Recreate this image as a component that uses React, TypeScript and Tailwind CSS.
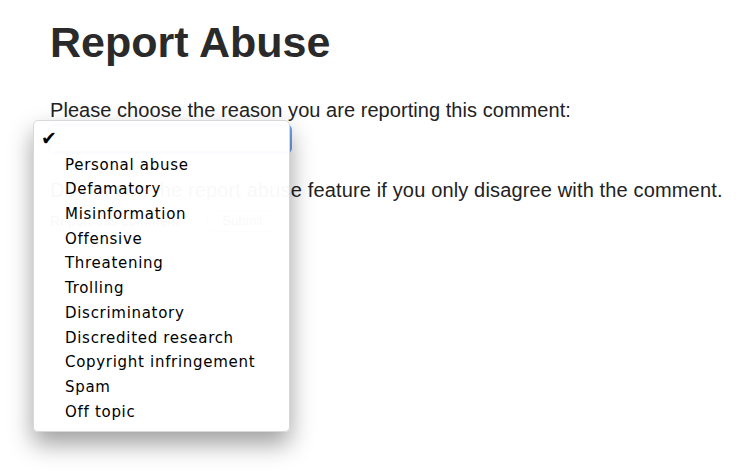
const reasons = [
  "Personal abuse",
  "Defamatory",
  "Misinformation",
  "Offensive",
  "Threatening",
  "Trolling",
  "Discriminatory",
  "Discredited research",
  "Copyright infringement",
  "Spam",
  "Off topic",
];

export default function App() {
  return (
    <div className="relative w-[754px] h-[476px] overflow-hidden bg-white pl-[50px] font-['Liberation_Sans',Arial,sans-serif] text-[#222]">
      {/* PAGE */}
      <h1 className="mt-[21px] text-[43px] leading-[43px] font-bold text-[#2a2a2a]">
        Report Abuse
      </h1>

      <p className="mt-[34px] text-[20px] leading-[24px] tracking-[0.05px]">
        Please choose the reason you are reporting this comment:
      </p>

      <div className="mt-[4px] w-[240px] h-[26px] rounded border border-[#aaa] ring-2 ring-[#6fa0e6]" />

      <p className="mt-[26px] text-[20px] leading-[24px] tracking-[0.15px]">
        Do not use the report abuse feature if you only disagree with the comment.
      </p>

      <div className="mt-[8px] flex items-center gap-[7px] text-[14px]">
        <span className="w-[150px]">Report this comment</span>
        <button className="w-[71px] h-[22px] rounded border border-[#bbb] bg-[#f2f2f2] text-[13px]">
          Submit
        </button>
      </div>

      {/* OPEN SELECT MENU */}
      <div className="absolute left-[33px] top-[120px] w-[257px] h-[312px] rounded-[5px] bg-white/[0.97] border border-[#d8d8d8] shadow-[0_12px_24px_rgba(0,0,0,0.38)] pt-[7px] font-['DejaVu_Sans',sans-serif] text-[15px] tracking-[0.7px] text-black">
        <div className="relative h-[24.7px] leading-[24.7px]">
          <span className="absolute left-[7px] -top-[2px] text-[19px]">✔</span>
        </div>
        {reasons.map((r) => (
          <div key={r} className="h-[24.7px] leading-[24.7px] pl-[31px] whitespace-nowrap">
            {r}
          </div>
        ))}
      </div>
    </div>
  );
}
